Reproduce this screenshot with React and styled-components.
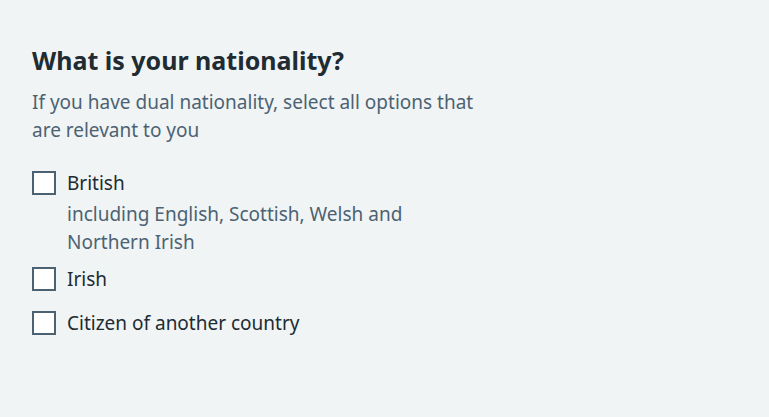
import React from "react";
import styled, { createGlobalStyle } from "styled-components";

const GlobalStyle = createGlobalStyle`
  body {
    margin: 0;
    background: #f0f4f5;
    font-family: "Noto Sans", "Liberation Sans", sans-serif;
    color: #212b32;
  }
`;

const Page = styled.div`
  padding: 44px 32px 32px;
`;

const Fieldset = styled.fieldset`
  margin: 0;
  padding: 0;
  border: 0;
`;

const Legend = styled.legend`
  padding: 0;
  margin: 0 0 12px;
  font-size: 25px;
  line-height: 32px;
  font-weight: 700;
`;

const Hint = styled.div`
  max-width: 470px;
  font-size: 19px;
  line-height: 28px;
  color: #4c6272;
  margin-bottom: ${(p) => p.$mb || 0}px;
`;

const Options = styled.div`
  display: flex;
  flex-direction: column;
`;

const Item = styled.label`
  display: grid;
  grid-template-columns: 24px 1fr;
  column-gap: 11px;
  align-items: center;
  margin-bottom: ${(p) => (p.$hasHint ? 9 : 16)}px;
  cursor: pointer;
`;

const Box = styled.input.attrs({ type: "checkbox" })`
  appearance: none;
  margin: 0;
  width: 24px;
  height: 24px;
  border: 2px solid #4c6272;
  background: #ffffff;
  box-sizing: border-box;
`;

const Label = styled.span`
  font-size: 19px;
  line-height: 28px;
`;

const ItemHint = styled(Hint)`
  grid-column: 2;
  max-width: 350px;
  margin-top: 3px;
`;

const options = [
  { label: "British", hint: "including English, Scottish, Welsh and Northern Irish" },
  { label: "Irish" },
  { label: "Citizen of another country" },
];

export default function App() {
  return (
    <>
      <GlobalStyle />
      <Page>
        <Fieldset>
          <Legend>What is your nationality?</Legend>
          <Hint $mb={25}>
            If you have dual nationality, select all options that are relevant to you
          </Hint>
          <Options>
            {options.map((o) => (
              <Item key={o.label} $hasHint={!!o.hint}>
                <Box />
                <Label>{o.label}</Label>
                {o.hint && <ItemHint>{o.hint}</ItemHint>}
              </Item>
            ))}
          </Options>
        </Fieldset>
      </Page>
    </>
  );
}
